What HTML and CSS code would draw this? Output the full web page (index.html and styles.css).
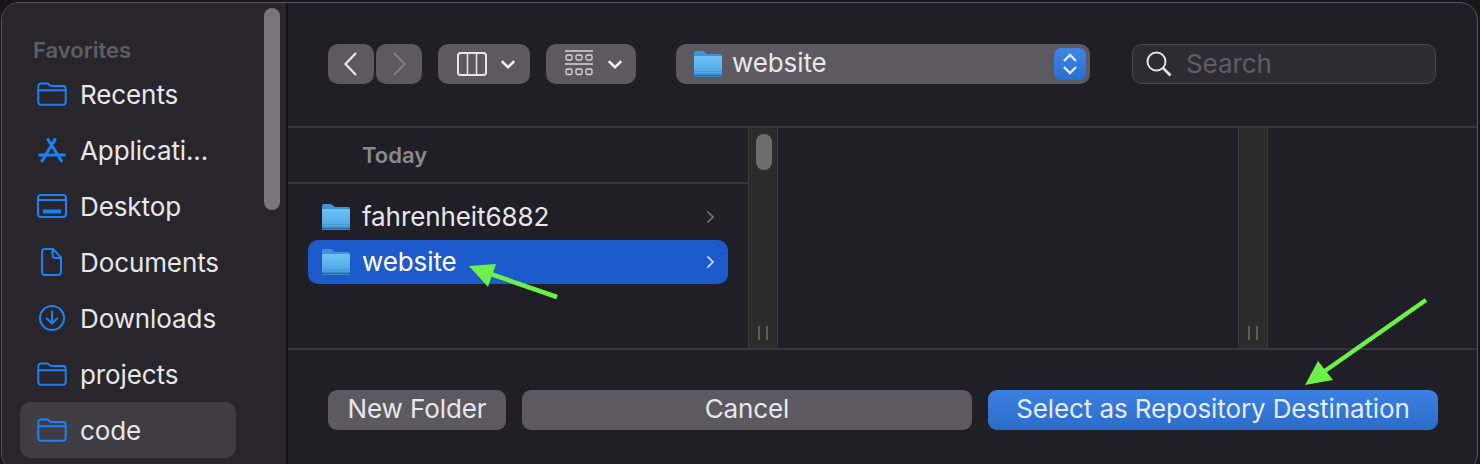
FILE: index.html
```html
<!DOCTYPE html>
<html lang="en">
<head>
  <meta charset="UTF-8">
  <title>Select as Repository Destination</title>
  <link rel="stylesheet" href="styles.css">
</head>
<body>
  <svg class="defs" width="0" height="0">
    <defs>
      <linearGradient id="folderFill" x1="0" y1="0" x2="0" y2="1">
        <stop offset="0" stop-color="#6fc3f3"/>
        <stop offset="1" stop-color="#479fe2"/>
      </linearGradient>
      <symbol id="folderColor" viewBox="0 0 28 28">
        <path d="M0 3a2 2 0 0 1 2-2h7l4 3h13a2 2 0 0 1 2 2v19a2 2 0 0 1-2 2H2a2 2 0 0 1-2-2z" fill="#3f94d8"/>
        <path d="M0 7a1 1 0 0 1 1-1h26a1 1 0 0 1 1 1v18a2 2 0 0 1-2 2H2a2 2 0 0 1-2-2z" fill="url(#folderFill)"/>
        <path d="M0 21.500h28M0 24h28" stroke="#3c8fd2" stroke-width="1" opacity=".6"/>
        <path d="M0 25.500h28" stroke="#2f6fa8" stroke-width="2"/>
      </symbol>
      <symbol id="folderLine" viewBox="0 0 30 24">
        <path d="M1.300 4a2.500 2.500 0 0 1 2.500-2.500h6.500c1.500 0 2 2.500 4 2.500h11.900a2.500 2.500 0 0 1 2.500 2.500v13.700a2.500 2.500 0 0 1-2.500 2.500H3.800a2.500 2.500 0 0 1-2.500-2.500zM1.300 8.200h27.400" fill="none" stroke="#1a82f7" stroke-width="2"/>
      </symbol>
    </defs>
  </svg>

  <div class="dialog">
    <aside class="sidebar">
      <h3 class="sidebar-title">Favorites</h3>
      <ul class="places">
        <li class="place"><svg class="place-icon"><use href="#folderLine"/></svg>Recents</li>
        <li class="place">
          <svg class="place-icon" viewBox="0 0 30 26">
            <path d="M11 2.500 24.500 24M18 2.500 5 24" fill="none" stroke="#1a82f7" stroke-width="3" stroke-linecap="round"/>
            <path d="M2.500 18h25" fill="none" stroke="#1a82f7" stroke-width="3" stroke-linecap="round"/>
          </svg>Applicati...</li>
        <li class="place">
          <svg class="place-icon" viewBox="0 0 30 24">
            <rect x="1" y="1" width="28" height="22" rx="3" fill="none" stroke="#1a82f7" stroke-width="2"/>
            <path d="M1 6h28" stroke="#1a82f7" stroke-width="2"/>
            <rect x="6" y="15.500" width="18" height="4" fill="#1a82f7"/>
          </svg>Desktop</li>
        <li class="place">
          <svg class="place-icon tall" viewBox="0 0 30 28">
            <path d="M8 1h8l8 8.500V24a3 3 0 0 1-3 3H8a3 3 0 0 1-3-3V4a3 3 0 0 1 3-3zM15.500 1.500V7a3 3 0 0 0 3 3h5.500" fill="none" stroke="#1a82f7" stroke-width="2"/>
          </svg>Documents</li>
        <li class="place">
          <svg class="place-icon tall" viewBox="0 0 30 28">
            <circle cx="15" cy="14" r="12" fill="none" stroke="#1a82f7" stroke-width="2"/>
            <path d="M15 7.500v12M10 14.500l5 5 5-5" fill="none" stroke="#1a82f7" stroke-width="2" stroke-linecap="round"/>
          </svg>Downloads</li>
        <li class="place"><svg class="place-icon"><use href="#folderLine"/></svg>projects</li>
        <li class="place current"><svg class="place-icon"><use href="#folderLine"/></svg>code</li>
      </ul>
      <div class="sidebar-thumb"></div>
    </aside>

    <main class="panel">
      <div class="toolbar">
        <div class="nav-pair">
          <button class="tool nav-btn">
            <svg width="16" height="26" viewBox="0 0 16 26"><path d="M13 2 2.500 13 13 24" fill="none" stroke="#e6e5e7" stroke-width="2.200"/></svg>
          </button>
          <button class="tool nav-btn">
            <svg width="16" height="26" viewBox="0 0 16 26"><path d="M3 2l10.500 11L3 24" fill="none" stroke="#7f7d83" stroke-width="2.200"/></svg>
          </button>
        </div>
        <button class="tool view-btn">
          <svg width="30" height="24" viewBox="0 0 30 24"><rect x="1" y="1" width="28" height="22" rx="2.500" fill="none" stroke="#e6e5e7" stroke-width="2"/><path d="M10.500 1v22M19.500 1v22" stroke="#e6e5e7" stroke-width="1.500"/></svg>
          <svg class="caret" width="14" height="9" viewBox="0 0 14 9"><path d="M.8 1.200 7 7.200l6.200-6" fill="none" stroke="#f0eff1" stroke-width="2.600"/></svg>
        </button>
        <button class="tool group-btn">
          <svg width="28" height="28" viewBox="0 0 28 28"><path d="M0 1h28M0 14h28" stroke="#d8d7da" stroke-width="1.500"/><g fill="none" stroke="#d8d7da" stroke-width="1.300"><rect x="1" y="5" width="6" height="5" rx="1.500"/><rect x="11" y="5" width="6" height="5" rx="1.500"/><rect x="21" y="5" width="6" height="5" rx="1.500"/><rect x="1" y="19" width="6" height="5.500" rx="1.500"/><rect x="11" y="19" width="6" height="5.500" rx="1.500"/><rect x="21" y="19" width="6" height="5.500" rx="1.500"/></g></svg>
          <svg class="caret" width="14" height="9" viewBox="0 0 14 9"><path d="M.8 1.200 7 7.200l6.200-6" fill="none" stroke="#f0eff1" stroke-width="2.600"/></svg>
        </button>
        <div class="tool path-popup">
          <svg class="folder-icon" width="28" height="28"><use href="#folderColor"/></svg>
          <span class="path-name">website</span>
          <span class="stepper">
            <svg width="18" height="24" viewBox="0 0 18 24"><path d="M3 9l6-6 6 6M3 15l6 6 6-6" fill="none" stroke="#e4effd" stroke-width="2.400"/></svg>
          </span>
        </div>
        <div class="search">
          <svg width="26" height="26" viewBox="0 0 26 26"><circle cx="10.500" cy="10.500" r="9" fill="none" stroke="#e6e5e7" stroke-width="2"/><path d="M17 17l7.500 7.500" stroke="#e6e5e7" stroke-width="2.600"/></svg>
          <span class="search-text">Search</span>
        </div>
      </div>

      <div class="browser">
        <section class="column first-column">
          <div class="column-head">Today</div>
          <ul class="files">
            <li class="file"><svg class="folder-icon" width="28" height="28"><use href="#folderColor"/></svg><span class="file-name">fahrenheit6882</span>
              <svg class="file-arrow" width="9" height="14" viewBox="0 0 9 14"><path d="M1.500 1.500 7 7l-5.500 5.500" fill="none" stroke="#7b797f" stroke-width="1.600"/></svg></li>
            <li class="file selected"><svg class="folder-icon" width="28" height="28"><use href="#folderColor"/></svg><span class="file-name">website</span>
              <svg class="file-arrow" width="9" height="14" viewBox="0 0 9 14"><path d="M1.500 1.500 7 7l-5.500 5.500" fill="none" stroke="#dfe8fa" stroke-width="1.600"/></svg></li>
          </ul>
        </section>
        <div class="track"><span class="thumb"></span><span class="grip"></span></div>
        <section class="column"></section>
        <div class="track"><span class="grip"></span></div>
        <section class="column"></section>
      </div>

      <div class="footer">
        <button class="action new-folder">New Folder</button>
        <button class="action cancel">Cancel</button>
        <button class="action confirm">Select as Repository Destination</button>
      </div>
    </main>
  </div>

  <!-- green arrows drawn on top of the screenshot -->
  <svg class="annotations" width="1480" height="464" viewBox="0 0 1480 464">
    <path d="M557 297 482 271" stroke="#6df04a" stroke-width="4.500"/>
    <path d="M469 266 496 264 488 287z" fill="#6df04a"/>
    <path d="M1426 300 1322 373" stroke="#6df04a" stroke-width="4.500"/>
    <path d="M1305 385 1318 361 1333 380z" fill="#6df04a"/>
  </svg>
</body>
</html>
```

FILE: styles.css
```css
html, body { margin: 0; height: 464px; overflow: hidden; }
body { background: #17161a; font-family: Inter, "Noto Sans", sans-serif; color: #e8e7e9; position: relative; }
ul { list-style: none; margin: 0; padding: 0; }
button { font-family: inherit; border: none; padding: 0; color: inherit; }
.defs { position: absolute; }

.dialog { display: flex; height: 470px; margin: 2px 2px 0 1px; border: 1px solid #57555b; border-radius: 18px; overflow: hidden; background: #201f27; box-sizing: border-box; }

.sidebar { position: relative; width: 284px; flex: none; background: #28262c; border-right: 2px solid #111014; box-sizing: content-box; }
.sidebar-title { margin: 0; padding: 34px 0 0 31px; height: 26px; font-size: 22px; line-height: 26px; font-weight: 600; color: #5f5d63; }
.places { padding: 3px 50px 0 18px; }
.place { display: flex; align-items: center; gap: 13px; height: 56px; padding-left: 17px; border-radius: 11px; font-size: 26px; letter-spacing: -0.1px; }
.place.current { background: #3f3d43; }
.place-icon { width: 30px; height: 26px; flex: none; }
.place-icon.tall { height: 28px; }
.sidebar-thumb { position: absolute; left: 262px; top: 5px; width: 16px; height: 202px; border-radius: 8px; background: #78767c; }

.panel { flex: 1; display: flex; flex-direction: column; min-width: 0; }

.toolbar { display: flex; align-items: center; height: 125px; padding: 0 0 1px 40px; box-sizing: border-box; border-bottom: 2px solid #38363d; }
.nav-pair { display: flex; gap: 2px; }
.tool { display: flex; align-items: center; height: 40px; border-radius: 10px; background: #5c5a60; box-sizing: border-box; }
.nav-btn { width: 46px; justify-content: center; }
.view-btn { width: 92px; margin-left: 16px; padding-left: 19px; }
.group-btn { width: 90px; margin-left: 16px; padding-left: 19px; }
.caret { margin-left: 14px; }
.group-btn .caret { margin-left: 15px; }
.path-popup { width: 414px; margin-left: 40px; padding: 0 4px 0 18px; }
.path-name { flex: 1; margin-left: 10px; padding-bottom: 3px; font-size: 26px; letter-spacing: -0.1px; }
.stepper { display: flex; align-items: center; justify-content: center; width: 32px; height: 32px; border-radius: 7px; background: linear-gradient(#3f85e6, #2a6fd0); }
.search { display: flex; align-items: center; width: 304px; height: 40px; margin-left: 42px; padding-left: 13px; box-sizing: border-box; background: #2d2b33; border: 1px solid #4b4950; border-radius: 10px; }
.search-text { margin-left: 14px; padding-bottom: 1px; font-size: 26px; letter-spacing: -0.1px; color: #605e64; }

.browser { display: flex; height: 220px; border-bottom: 2px solid #38363d; }
.column { flex: none; width: 460px; }
.first-column { width: 460px; }
.column:last-child { flex: 1; }
.column-head { height: 56px; line-height: 55px; padding-left: 74px; box-sizing: border-box; font-size: 22px; font-weight: 600; color: #8c8a8f; border-bottom: 2px solid #38363d; }
.files { display: flex; flex-direction: column; gap: 1px; padding: 11px 20px 0 20px; }
.file { display: flex; align-items: center; height: 44px; padding: 0 13px 0 14px; border-radius: 10px; }
.file-name { flex: 1; margin-left: 12px; padding-bottom: 2px; font-size: 26px; letter-spacing: -0.1px; }
.file.selected { background: #1d5acb; color: #fff; }
.track { position: relative; flex: none; width: 28px; background: #2c2c2c; border-left: 1px solid #3a393c; border-right: 1px solid #3a393c; }
.thumb { position: absolute; left: 7px; top: 6px; width: 16px; height: 36px; border-radius: 8px; background: #6d6d6d; }
.grip { position: absolute; left: 9px; bottom: 8px; width: 6px; height: 14px; border-left: 2px solid #5e5e5e; border-right: 2px solid #5e5e5e; }

.footer { display: flex; gap: 16px; padding: 40px 0 0 40px; }
.action { height: 40px; padding-bottom: 3px; border-radius: 9px; background: #5c5a60; font-size: 26px; letter-spacing: -0.1px; color: #e8e7e9; }
.new-folder { width: 178px; }
.cancel { width: 450px; }
.confirm { width: 450px; background: linear-gradient(#3b80e2, #2d6cc8); color: #e4edfb; }

.annotations { position: absolute; left: 0; top: 0; }
```
